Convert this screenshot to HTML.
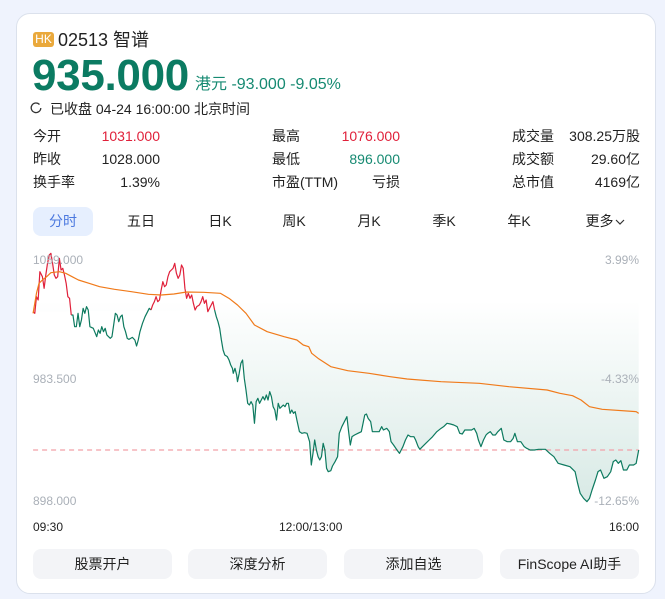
<!DOCTYPE html>
<html><head><meta charset="utf-8"><style>
*{margin:0;padding:0;box-sizing:border-box}
body{width:665px;height:599px;background:#eff3fd;font-family:"Liberation Sans","Noto Sans CJK SC",sans-serif;position:relative;overflow:hidden;color:#222}
.card{position:absolute;left:16px;top:13px;width:640px;height:581px;background:#fff;border:1px solid #dbe1ec;border-radius:14px}
.a{position:absolute;white-space:nowrap}
.hk{left:33px;top:32px;width:21px;height:15px;background:#eaa93c;color:#fff;font-size:12px;line-height:15px;text-align:center;border-radius:3px}
.r{text-align:right}
.s{font-size:14px;line-height:16px}
.tab{position:absolute;top:207px;height:29px;line-height:29px;font-size:14px;color:#222;text-align:center;width:60px}
.btn{position:absolute;top:549px;height:30px;width:139px;background:#f3f4f7;border-radius:8px;font-size:14px;line-height:30px;text-align:center;color:#222}
.g{font-size:12px;color:#aab0b8}
</style></head><body>
<div class="card"></div>
<div class="a hk">HK</div>
<div class="a" style="left:58px;top:30px;font-size:18px;line-height:20px">02513 智谱</div>
<div class="a" style="left:32px;top:52px;font-size:44px;font-weight:bold;color:#0b7b62;line-height:48px;letter-spacing:-0.3px">935.000</div>
<div class="a" style="left:195px;top:76px;font-size:16px;color:#168a72;line-height:18px">港元 -93.000 -9.05%</div>
<svg class="a" style="left:30px;top:102px" width="12" height="12" viewBox="0 0 12 12"><path d="M9.5 2.5 A4.8 4.8 0 1 0 10.8 6" fill="none" stroke="#333" stroke-width="1.3"/></svg>
<div class="a s" style="left:50px;top:101px">已收盘 04-24 16:00:00 北京时间</div>

<div class="a s" style="left:33px;top:128px">今开</div><div class="a s r" style="right:505px;top:128px;color:#e0203a">1031.000</div>
<div class="a s" style="left:33px;top:151px">昨收</div><div class="a s r" style="right:505px;top:151px">1028.000</div>
<div class="a s" style="left:33px;top:174px">换手率</div><div class="a s r" style="right:505px;top:174px">1.39%</div>
<div class="a s" style="left:272px;top:128px">最高</div><div class="a s r" style="right:265px;top:128px;color:#e0203a">1076.000</div>
<div class="a s" style="left:272px;top:151px">最低</div><div class="a s r" style="right:265px;top:151px;color:#168a72">896.000</div>
<div class="a s" style="left:272px;top:174px">市盈(TTM)</div><div class="a s r" style="right:265px;top:174px">亏损</div>
<div class="a s" style="left:512px;top:128px">成交量</div><div class="a s r" style="right:25px;top:128px">308.25万股</div>
<div class="a s" style="left:512px;top:151px">成交额</div><div class="a s r" style="right:25px;top:151px">29.60亿</div>
<div class="a s" style="left:512px;top:174px">总市值</div><div class="a s r" style="right:25px;top:174px">4169亿</div>

<div class="tab" style="left:33px;background:#e6effe;border-radius:8px;color:#4b78df">分时</div>
<div class="tab" style="left:111px">五日</div>
<div class="tab" style="left:190px">日K</div>
<div class="tab" style="left:264px">周K</div>
<div class="tab" style="left:339px">月K</div>
<div class="tab" style="left:414px">季K</div>
<div class="tab" style="left:489px">年K</div>
<div class="tab" style="left:575px">更多<svg width="10" height="8" viewBox="0 0 10 8" style="margin-left:1px"><path d="M1 2 L5 6 L9 2" fill="none" stroke="#333" stroke-width="1.2"/></svg></div>

<svg class="a" style="left:0;top:250px" width="665" height="349" viewBox="0 0 1568 1047" preserveAspectRatio="none">
<defs>
<linearGradient id="gg" x1="0" y1="0" x2="0" y2="1"><stop offset="0.2" stop-color="#0d7a5f" stop-opacity="0"/><stop offset="1" stop-color="#0d7a5f" stop-opacity="0.16"/></linearGradient>
<linearGradient id="pg" x1="0" y1="0" x2="0" y2="1"><stop offset="0" stop-color="#e0203a" stop-opacity="0.2"/><stop offset="0.25" stop-color="#e0203a" stop-opacity="0"/></linearGradient>
</defs>
<path d="M78 0 L78 185 L506 180 L510 200 L514 215 L518 235 L522 270 L526 300 L530 315 L536 320 L540 330 L544 345 L548 355 L550 370 L554 355 L558 375 L560 395 L564 370 L568 340 L572 330 L576 385 L580 420 L584 460 L588 465 L592 455 L596 465 L600 520 L604 455 L608 445 L612 460 L616 450 L620 440 L624 450 L628 435 L632 450 L636 425 L640 440 L644 470 L648 480 L652 510 L656 460 L660 475 L664 470 L668 465 L672 470 L676 460 L680 460 L684 490 L688 480 L692 490 L696 485 L700 510 L706 545 L712 550 L718 548 L724 550 L730 575 L734 645 L738 610 L742 570 L746 600 L750 620 L754 630 L758 620 L762 580 L766 600 L770 655 L774 665 L780 662 L784 648 L790 635 L796 620 L800 550 L806 530 L812 515 L818 500 L822 545 L826 585 L830 560 L836 555 L844 550 L852 545 L856 520 L860 495 L864 492 L868 505 L874 515 L878 545 L886 545 L894 545 L900 530 L904 540 L912 535 L918 545 L922 575 L928 585 L936 600 L942 610 L946 600 L950 590 L956 570 L962 555 L968 560 L976 560 L980 570 L986 590 L990 598 L996 590 L1004 580 L1012 570 L1020 560 L1030 545 L1040 535 L1046 530 L1054 520 L1062 522 L1070 525 L1078 530 L1084 550 L1090 552 L1096 540 L1104 540 L1112 540 L1118 535 L1124 550 L1128 570 L1134 590 L1140 570 L1146 555 L1150 550 L1156 545 L1162 555 L1168 555 L1174 545 L1182 535 L1188 570 L1196 575 L1204 575 L1210 565 L1214 550 L1220 575 L1228 575 L1236 590 L1242 595 L1250 600 L1260 600 L1270 598 L1286 598 L1296 610 L1306 620 L1316 640 L1330 645 L1344 650 L1356 665 L1362 700 L1368 730 L1376 745 L1384 755 L1390 745 L1396 720 L1404 690 L1410 665 L1416 660 L1424 685 L1432 680 L1440 665 L1446 635 L1452 630 L1458 640 L1464 632 L1470 660 L1478 660 L1484 645 L1494 645 L1500 640 L1506 600 L1506 0 Z" fill="url(#gg)"/>
<path d="M78 190 L82 190 L86 140 L90 150 L94 65 L100 80 L104 115 L108 75 L112 40 L116 15 L120 10 L124 40 L128 75 L132 85 L136 80 L140 25 L144 60 L148 55 L152 75 L156 100 L160 140 L164 145 L168 195 L360 195 L364 155 L368 140 L372 155 L376 150 L380 120 L384 95 L388 110 L392 105 L396 80 L400 65 L404 60 L408 55 L412 40 L416 70 L420 85 L424 75 L428 45 L432 55 L436 115 L440 145 L444 130 L448 145 L452 135 L456 160 L460 180 L506 180 L506 260 L78 260 Z" fill="url(#pg)"/>
<line x1="78" y1="600" x2="1506" y2="600" stroke="#f2a0a8" stroke-width="1.2" stroke-dasharray="5,4" vector-effect="non-scaling-stroke"/>
<g fill="none" stroke-width="1.2" vector-effect="non-scaling-stroke" stroke-linejoin="round">
<polyline vector-effect="non-scaling-stroke" stroke="#0d7a5f" points="168,195 172,195 176,230 180,230 184,190 188,230 192,210 196,175 200,190 204,170 208,180 212,230 220,235 228,260 232,240 236,250 240,230 244,245 248,235 252,255 256,260 260,265 264,260 268,225 272,190 276,195 280,215 284,200 288,195 292,230 296,245 300,265 304,268 312,262 318,270 322,288 326,270 330,245 336,220 342,200 348,185 352,175 356,180"/>
<polyline vector-effect="non-scaling-stroke" stroke="#0d7a5f" points="506,180 510,200 514,215 518,235 522,270 526,300 530,315 536,320 540,330 544,345 548,355 550,370 554,355 558,375 560,395 564,370 568,340 572,330 576,385 580,420 584,460 588,465 592,455 596,465 600,520 604,455 608,445 612,460 616,450 620,440 624,450 628,435 632,450 636,425 640,440 644,470 648,480 652,510 656,460 660,475 664,470 668,465 672,470 676,460 680,460 684,490 688,480 692,490 696,485 700,510 706,545 712,550 718,548 724,550 730,575 734,645 738,610 742,570 746,600 750,620 754,630 758,620 762,580 766,600 770,655 774,665 780,662 784,648 790,635 796,620 800,550 806,530 812,515 818,500 822,545 826,585 830,560 836,555 844,550 852,545 856,520 860,495 864,492 868,505 874,515 878,545 886,545 894,545 900,530 904,540 912,535 918,545 922,575 928,585 936,600 942,610 946,600 950,590 956,570 962,555 968,560 976,560 980,570 986,590 990,598 996,590 1004,580 1012,570 1020,560 1030,545 1040,535 1046,530 1054,520 1062,522 1070,525 1078,530 1084,550 1090,552 1096,540 1104,540 1112,540 1118,535 1124,550 1128,570 1134,590 1140,570 1146,555 1150,550 1156,545 1162,555 1168,555 1174,545 1182,535 1188,570 1196,575 1204,575 1210,565 1214,550 1220,575 1228,575 1236,590 1242,595 1250,600 1260,600 1270,598 1286,598 1296,610 1306,620 1316,640 1330,645 1344,650 1356,665 1362,700 1368,730 1376,745 1384,755 1390,745 1396,720 1404,690 1410,665 1416,660 1424,685 1432,680 1440,665 1446,635 1452,630 1458,640 1464,632 1470,660 1478,660 1484,645 1494,645 1500,640 1506,600"/>
<polyline vector-effect="non-scaling-stroke" stroke="#e0203a" points="78,185 82,190 86,140 90,150 94,65 100,80 104,115 108,75 112,40 116,15 120,10 124,40 128,75 132,85 136,80 140,25 144,60 148,55 152,75 156,100 160,140 164,145 168,195"/>
<polyline vector-effect="non-scaling-stroke" stroke="#e0203a" points="356,180 360,165 364,155 368,140 372,155 376,150 380,120 384,95 388,110 392,105 396,80 400,65 404,60 408,55 412,40 416,70 420,85 424,75 428,45 432,55 436,115 440,145 444,130 448,145 452,135 456,160 460,180 464,170 470,165 474,155 478,140 482,160 486,150 490,185 494,175 498,165 502,155 506,180"/>
<polyline vector-effect="non-scaling-stroke" stroke="#f07a1a" points="78,190 86,130 92,100 100,90 110,80 120,68 140,65 155,70 170,80 185,90 210,100 235,110 270,118 310,125 350,133 380,135 410,132 440,126 480,127 520,130 540,145 560,165 580,190 600,225 630,245 670,260 700,270 715,285 728,290 735,310 750,325 780,350 820,362 870,370 920,380 960,387 1040,395 1130,400 1200,410 1290,420 1320,430 1350,437 1370,450 1390,470 1420,478 1500,485 1506,490"/>
</g>
</svg>
<div class="a g" style="left:33px;top:253px">1059.000</div>
<div class="a g r" style="right:26px;top:253px">3.99%</div>
<div class="a g" style="left:33px;top:372px">983.500</div>
<div class="a g r" style="right:26px;top:372px">-4.33%</div>
<div class="a g" style="left:33px;top:494px">898.000</div>
<div class="a g r" style="right:26px;top:494px">-12.65%</div>
<div class="a" style="left:33px;top:520px;font-size:12px">09:30</div>
<div class="a" style="left:279px;top:520px;font-size:12px">12:00/13:00</div>
<div class="a r" style="right:26px;top:520px;font-size:12px">16:00</div>

<div class="btn" style="left:33px">股票开户</div>
<div class="btn" style="left:188px">深度分析</div>
<div class="btn" style="left:344px">添加自选</div>
<div class="btn" style="left:500px">FinScope AI助手</div>
</body></html>
